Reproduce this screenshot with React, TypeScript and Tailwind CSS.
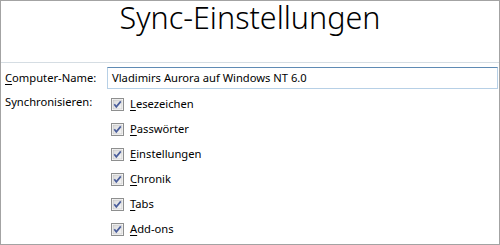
import React from "react";

const font = { fontFamily: '"Segoe UI", "Noto Sans", "Open Sans", sans-serif' };

function Check() {
  return (
    <svg width="13" height="13" viewBox="0 0 13 13" className="shrink-0">
      <defs>
        <linearGradient id="cbg" x1="0" y1="0" x2="1" y2="1">
          <stop offset="0" stopColor="#d9d9d9" />
          <stop offset="1" stopColor="#f7f7f7" />
        </linearGradient>
      </defs>
      <rect x="0.5" y="0.5" width="12" height="12" fill="#ffffff" stroke="#8e8f8f" />
      <rect x="2" y="2" width="9" height="9" fill="url(#cbg)" stroke="#b3b3b3" strokeWidth="0.5" />
      <path d="M3.3 6.3 L5.3 8.8 L9.8 3.4" fill="none" stroke="#4a5e9c" strokeWidth="1.7" />
    </svg>
  );
}

function Item({ k, rest }: { k: string; rest: string }) {
  return (
    <div className="flex items-center h-[25px]">
      <Check />
      <span className="ml-[6px] text-[11.2px] text-black">
        <span className="underline underline-offset-2">{k}</span>
        {rest}
      </span>
    </div>
  );
}

export default function App() {
  return (
    <div
      style={font}
      className="w-[500px] h-[245px] bg-white border border-[#a3a3a3] overflow-hidden text-black"
    >
      <div className="h-[61px] flex justify-center pt-[1px]">
        <div className="text-[30.5px] leading-[30px] h-[40px] font-light">Sync-Einstellungen</div>
      </div>
      <div className="h-px bg-[#d5dde3]" />
      <div className="flex items-center pt-[4px]">
        <div className="w-[106px] pl-[4px] text-[11.2px]">
          <span className="underline underline-offset-2">C</span>omputer-Name:
        </div>
        <div className="flex-1 mr-[1px] h-[22px] border border-[#b7d0e6] border-t-[#5f8bb4] flex items-center pl-[4px] text-[11.2px]">
          Vladimirs Aurora auf Windows NT 6.0
        </div>
      </div>
      <div className="flex pt-[3px]">
        <div className="w-[110px] pl-[4px] text-[11.2px] pt-[2px]">Synchronisieren:</div>
        <div className="flex flex-col">
          <Item k="L" rest="esezeichen" />
          <Item k="P" rest="asswörter" />
          <Item k="E" rest="instellungen" />
          <Item k="C" rest="hronik" />
          <Item k="T" rest="abs" />
          <Item k="A" rest="dd-ons" />
        </div>
      </div>
    </div>
  );
}
